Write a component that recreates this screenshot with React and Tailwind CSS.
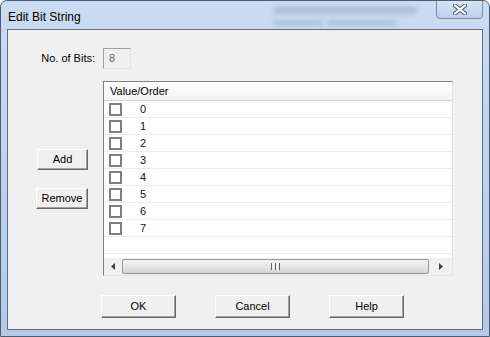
import React from 'react';

const bits = [0, 1, 2, 3, 4, 5, 6, 7];

function Btn({ label, w }) {
  return (
    <button
      className={`${w} h-full bg-[#f0f0f0] border border-t-white border-l-white border-r-[#696969] border-b-[#696969] shadow-[inset_-1px_-1px_0_#a0a0a0] text-[11px] text-black leading-none`}
    >
      {label}
    </button>
  );
}

function CloseIcon() {
  return (
    <svg width="14" height="11" viewBox="0 0 14 11">
      <path d="M2 1.5 L12 9.5 M12 1.5 L2 9.5" stroke="#55677f" strokeWidth="4.2" strokeLinecap="round" />
      <path d="M2 1.5 L12 9.5 M12 1.5 L2 9.5" stroke="#ffffff" strokeWidth="2.2" strokeLinecap="round" />
    </svg>
  );
}

export default function App() {
  return (
    <div className="w-[490px] h-[337px] bg-white" style={{ fontFamily: '"Liberation Sans", Arial, sans-serif' }}>
      <div className="relative w-[490px] h-[337px] flex flex-col overflow-hidden rounded-t-[7px] border border-[#4d5c70] bg-gradient-to-b from-[#c9dcf2] via-[#bdd3ec] to-[#b3cae6]">
        {/* blurred aero background */}
        <div className="absolute left-[272px] top-[6px] w-[55px] h-[7px] rounded bg-[#7f8fa8]/40 blur-[2px]" />
        <div className="absolute left-[272px] top-[19px] w-[50px] h-[6px] rounded bg-[#7f8fa8]/30 blur-[2px]" />
        <div className="absolute left-[326px] top-[6px] w-[90px] h-[7px] rounded bg-[#7f8fa8]/40 blur-[2px]" />
        <div className="absolute left-[326px] top-[19px] w-[70px] h-[6px] rounded bg-[#7f8fa8]/30 blur-[2px]" />

        {/* title bar */}
        <div className="relative h-[28px] flex items-start">
          <span className="pl-[7px] pt-[7px] text-[12px] text-black">Edit Bit String</span>
          <div className="ml-auto mr-[6px] w-[47px] h-[19px] -mt-px flex items-center justify-center rounded-b-[4px] border border-[#7d8ca2] bg-gradient-to-b from-[#d6e4f5] to-[#bcd0ea]">
            <CloseIcon />
          </div>
        </div>

        {/* client area */}
        <div className="mx-[6px] h-[301px] border border-[#5e6e84] bg-[#f0f0f0] flex flex-col text-[11px] text-black">
          <div className="mt-[18px] h-[21px] flex">
            <div className="w-[95px] pr-[8px] flex items-center justify-end">No. of Bits:</div>
            <div className="w-[28px] h-[21px] border border-t-[#a0a0a0] border-l-[#a0a0a0] border-r-[#e3e3e3] border-b-[#e3e3e3] bg-[#f0f0f0] pl-[5px] flex items-center text-[#6d6d6d]">
              8
            </div>
          </div>

          <div className="mt-[12px] flex">
            <div className="w-[95px] pr-[15px] flex flex-col items-end">
              <div className="mt-[68px] h-[21px]">
                <Btn label="Add" w="w-[51px]" />
              </div>
              <div className="mt-[18px] h-[21px]">
                <Btn label="Remove" w="w-[52px]" />
              </div>
            </div>

            <div className="w-[350px] h-[195px] border border-t-[#828282] border-l-[#828282] border-r-[#e3e3e3] border-b-[#e3e3e3] bg-white flex flex-col">
              <div className="h-[19px] flex items-center pl-[6px] border-b border-[#d5d5d5] bg-gradient-to-b from-white to-[#f2f2f2]">
                Value/Order
              </div>
              {bits.map((b) => (
                <div key={b} className="h-[17px] flex items-center border-b border-[#ececec]">
                  <div className="ml-[5px] w-[13px] h-[13px] border-2 border-[#7f7f7f] bg-white" />
                  <span className="ml-[18px] text-[#10103a]">{b}</span>
                </div>
              ))}
              <div className="h-[17px] border-b border-[#ececec]" />
              <div className="flex-1" />
              <div className="h-[17px] flex items-center bg-[#f0f0f0]">
                <div className="w-[18px] h-full flex items-center justify-center">
                  <svg width="4" height="7" viewBox="0 0 4 7"><path d="M4 0 L0 3.5 L4 7 Z" fill="#404040" /></svg>
                </div>
                <div className="w-[307px] h-[15px] rounded-[2px] border border-[#979797] bg-gradient-to-b from-[#f4f4f4] via-[#e6e6e6] to-[#d4d4d4] flex items-center justify-center gap-[1px]">
                  <span className="w-px h-[7px] bg-[#606060]" />
                  <span className="w-px h-[7px] bg-white" />
                  <span className="w-px h-[7px] bg-[#606060]" />
                  <span className="w-px h-[7px] bg-white" />
                  <span className="w-px h-[7px] bg-[#606060]" />
                </div>
                <div className="flex-1 h-full flex items-center justify-center">
                  <svg width="4" height="7" viewBox="0 0 4 7"><path d="M0 0 L4 3.5 L0 7 Z" fill="#404040" /></svg>
                </div>
              </div>
            </div>
          </div>

          <div className="mt-[19px] h-[23px] flex pl-[93px] gap-[39px]">
            <Btn label="OK" w="w-[75px]" />
            <Btn label="Cancel" w="w-[75px]" />
            <Btn label="Help" w="w-[75px]" />
          </div>
        </div>
      </div>
    </div>
  );
}
